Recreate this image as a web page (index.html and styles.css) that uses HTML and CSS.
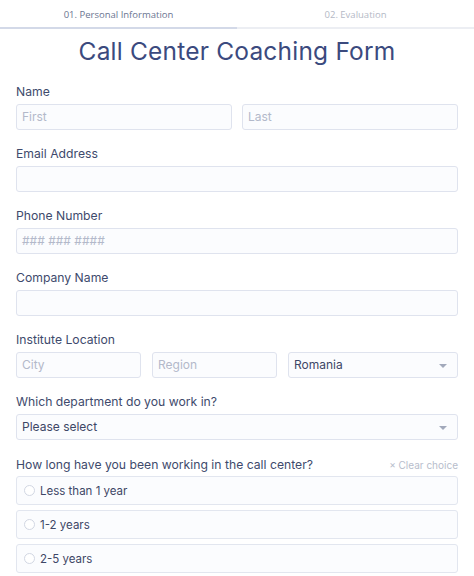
FILE: index.html
```html
<!DOCTYPE html>
<html>
<head>
<meta charset="utf-8">
<link rel="stylesheet" href="styles.css">
</head>
<body>
<div class="tabs">
  <div class="tab active">01. Personal Information</div>
  <div class="tab">02. Evaluation</div>
</div>
<div class="progress"><div class="progress-fill"></div></div>
<h1 class="title">Call Center Coaching Form</h1>
<form class="form">
  <div class="field">
    <div class="label">Name</div>
    <div class="row two">
      <div class="input placeholder">First</div>
      <div class="input placeholder">Last</div>
    </div>
  </div>
  <div class="field">
    <div class="label">Email Address</div>
    <div class="input"></div>
  </div>
  <div class="field">
    <div class="label">Phone Number</div>
    <div class="input placeholder">### ### ####</div>
  </div>
  <div class="field">
    <div class="label">Company Name</div>
    <div class="input"></div>
  </div>
  <div class="field">
    <div class="label">Institute Location</div>
    <div class="row three">
      <div class="input placeholder">City</div>
      <div class="input placeholder">Region</div>
      <div class="input select">Romania<span class="caret"></span></div>
    </div>
  </div>
  <div class="field">
    <div class="label">Which department do you work in?</div>
    <div class="input select">Please select<span class="caret"></span></div>
  </div>
  <div class="field last">
    <div class="label-row">
      <div class="label">How long have you been working in the call center?</div>
      <div class="clear">× Clear choice</div>
    </div>
    <div class="options">
      <div class="option"><span class="radio"></span>Less than 1 year</div>
      <div class="option"><span class="radio"></span>1-2 years</div>
      <div class="option"><span class="radio"></span>2-5 years</div>
    </div>
  </div>
</form>
</body>
</html>
```
FILE: styles.css
```css
* { box-sizing: border-box; }
body {
  margin: 0;
  background: #ffffff;
  font-family: "Inter", "Noto Sans", sans-serif;
  color: #3e4a6c;
}
.tabs {
  display: flex;
  height: 27px;
  align-items: center;
}
.tab {
  flex: 1;
  text-align: center;
  font-family: "Open Sans", sans-serif;
  font-size: 9.5px;
  color: #b4b9c6;
  padding-top: 1px;
}
.tab.active { color: #6b7591; }
.progress {
  height: 2px;
  background: #eceef3;
}
.progress-fill {
  width: 50%;
  height: 100%;
  background: #d3d9e8;
}
.title {
  margin: 6px 0 15px;
  height: 32px;
  line-height: 32px;
  text-align: center;
  font-size: 24.5px;
  font-weight: 400;
  color: #3b4a7e;
  letter-spacing: 0.2px;
}
.form {
  padding: 0 16px;
}
.field {
  margin-bottom: 14px;
}
.field.last { padding-top: 1px; }
.label {
  font-size: 12.2px;
  line-height: 20px;
  height: 20px;
  margin-bottom: 2px;
  color: #3e4a6c;
}
.label-row {
  display: flex;
  justify-content: space-between;
  align-items: flex-start;
}
.clear {
  font-size: 10px;
  line-height: 20px;
  color: #b7bdcc;
}
.row { display: grid; }
.row.two { grid-template-columns: 1fr 1fr; column-gap: 10px; }
.row.three { grid-template-columns: 125px 125px 1fr; column-gap: 11px; }
.input {
  position: relative;
  height: 26px;
  border: 1px solid #dfe3ee;
  border-radius: 3px;
  background: #fbfcfe;
  font-size: 12px;
  line-height: 24px;
  padding: 0 5px;
  color: #3e4766;
}
.input.placeholder { color: #b3b9ca; }
.caret {
  position: absolute;
  right: 10px;
  top: 11px;
  width: 0;
  height: 0;
  border-left: 4px solid transparent;
  border-right: 4px solid transparent;
  border-top: 4px solid #a2a9bb;
}
.options {
  display: flex;
  flex-direction: column;
  gap: 5px;
  margin-top: -1px;
}
.option {
  display: flex;
  align-items: center;
  height: 29px;
  border: 1px solid #e2e6ef;
  border-radius: 3px;
  background: #fbfcfe;
  padding-left: 7px;
  font-size: 11.5px;
  color: #3e4766;
}
.radio {
  width: 11px;
  height: 11px;
  border: 1px solid #d2d7e3;
  border-radius: 50%;
  margin-right: 5px;
  background: #fff;
}
```
